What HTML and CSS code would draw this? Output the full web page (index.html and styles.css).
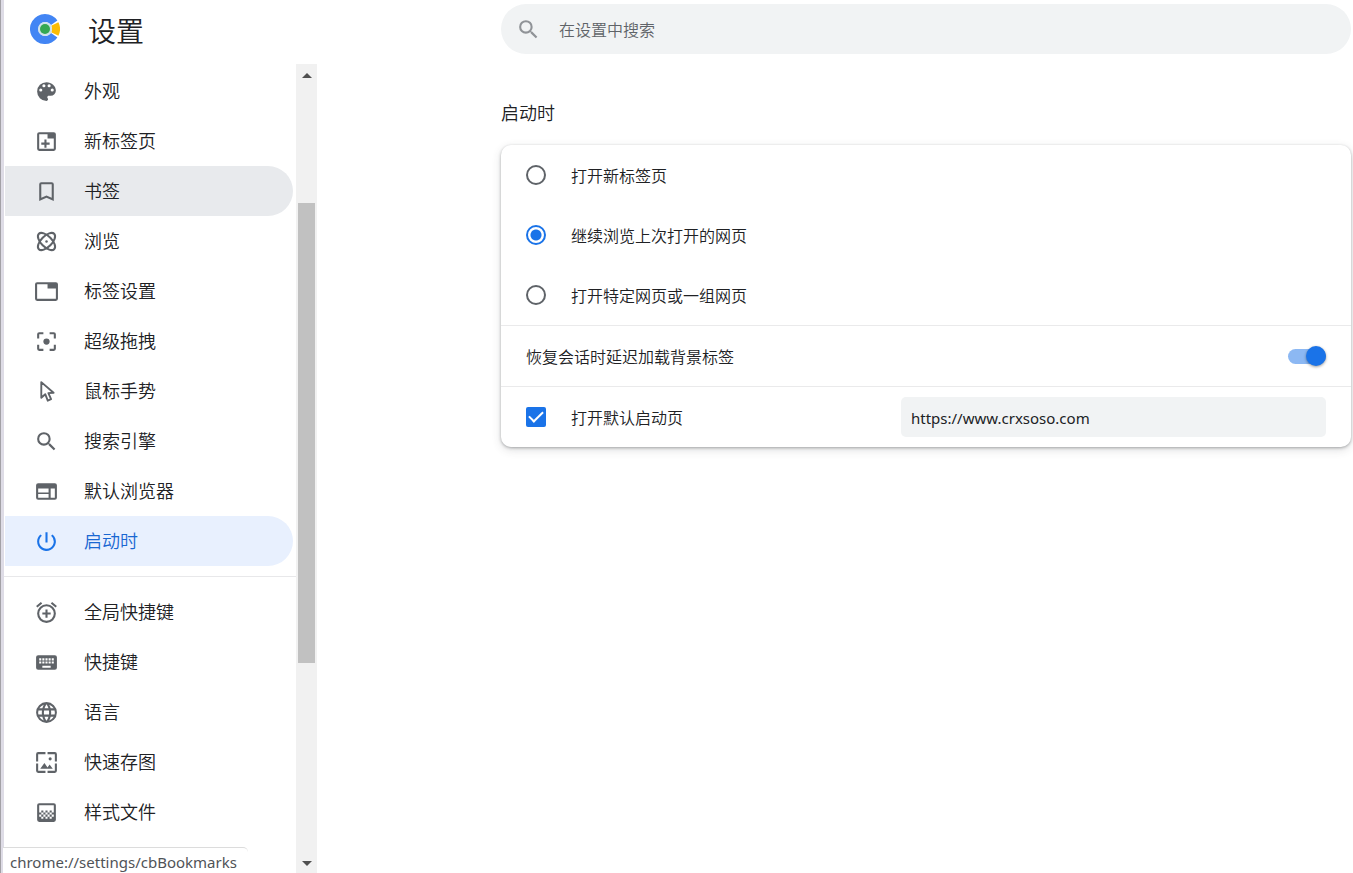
FILE: index.html
```html
<!DOCTYPE html>
<html lang="zh-CN">
<head>
<meta charset="utf-8">
<title>设置</title>
<link rel="stylesheet" href="styles.css">
</head>
<body>
<div class="app">
  <aside class="sidebar">
    <header class="brand">
      <svg class="logo" viewBox="0 0 30 30" aria-hidden="true">
        <path fill="#4285f4" d="M15 0A15 15 0 0 1 27.4 6.6L21 11A7 7 0 1 0 21 19L27.4 23.4A15 15 0 1 1 15 0z"/>
        <path fill="#fbbc05" d="M28.4 8.3A15 15 0 0 1 28.4 21.7L21.2 18.2A7 7 0 0 0 21.2 11.8z"/>
        <circle cx="15" cy="15" r="7" fill="#cfe3ea"/>
        <circle cx="15" cy="15" r="5" fill="#34a853"/>
      </svg>
      <h1 class="title">设置</h1>
    </header>
    <div class="scroll-area">
      <nav class="nav">
        <a class="item" href="#appearance"><svg class="icon" viewBox="0 0 24 24"><path fill-rule="evenodd" d="M12 3a9 9 0 0 0 0 18c.83 0 1.5-.67 1.5-1.5 0-.39-.15-.74-.39-1.01-.23-.26-.38-.61-.38-.99 0-.83.67-1.5 1.5-1.5H16a5 5 0 0 0 5-5c0-4.42-4.03-8-9-8zm-5.5 9a1.5 1.5 0 1 1 0-3 1.5 1.5 0 0 1 0 3zm3-4a1.5 1.5 0 1 1 0-3 1.5 1.5 0 0 1 0 3zm5 0a1.5 1.5 0 1 1 0-3 1.5 1.5 0 0 1 0 3zm3 4a1.5 1.5 0 1 1 0-3 1.5 1.5 0 0 1 0 3z"/></svg>外观</a>
        <a class="item" href="#newtab"><svg class="icon" viewBox="0 0 24 24"><path fill-rule="evenodd" d="M5 3h14a2 2 0 0 1 2 2v14a2 2 0 0 1-2 2H5a2 2 0 0 1-2-2V5a2 2 0 0 1 2-2zm0 2v14h14V9h-6V5z"/><path d="M10 10h2v3h3v2h-3v3h-2v-3H7v-2h3z"/></svg>新标签页</a>
        <a class="item hovered" href="#bookmarks"><svg class="icon" viewBox="0 0 24 24"><path d="M17 3H7a2 2 0 0 0-2 2v16l7-3 7 3V5a2 2 0 0 0-2-2zm0 15-5-2.18L7 18V5h10z"/></svg>书签</a>
        <a class="item" href="#browsing"><svg class="icon" viewBox="0 0 24 24"><g fill="none" stroke="currentColor" stroke-width="2"><ellipse cx="12" cy="12" rx="10.4" ry="5.200" transform="rotate(45 12 12)"/><ellipse cx="12" cy="12" rx="10.4" ry="5.200" transform="rotate(-45 12 12)"/></g><circle cx="12" cy="12" r="1.2"/></svg>浏览</a>
        <a class="item" href="#tabs"><svg class="icon" viewBox="0 0 24 24"><path fill-rule="evenodd" d="M3 3h18a2 2 0 0 1 2 2v14a2 2 0 0 1-2 2H3a2 2 0 0 1-2-2V5a2 2 0 0 1 2-2zm0 2v14h18V9h-8V5z"/></svg>标签设置</a>
        <a class="item" href="#drag"><svg class="icon" viewBox="0 0 24 24"><path d="M5 15H3v4a2 2 0 0 0 2 2h4v-2H5zM5 5h4V3H5a2 2 0 0 0-2 2v4h2zm14-2h-4v2h4v4h2V5a2 2 0 0 0-2-2zm0 16h-4v2h4a2 2 0 0 0 2-2v-4h-2z"/><circle cx="12" cy="12" r="3"/></svg>超级拖拽</a>
        <a class="item" href="#gestures"><svg class="icon" viewBox="0 0 24 24"><path d="M7 3v15l3.800-3.400 2.400 6.200 3.200-1.400-2.600-5.800 5-.4z" fill="none" stroke="currentColor" stroke-width="1.8" stroke-linejoin="round"/></svg>鼠标手势</a>
        <a class="item" href="#search"><svg class="icon" viewBox="0 0 24 24"><path d="M15.5 14h-.79l-.28-.27A6.47 6.47 0 0 0 16 9.5 6.5 6.5 0 1 0 9.5 16c1.61 0 3.09-.59 4.23-1.57l.27.28v.79l5 4.99L20.49 19zm-6 0a4.5 4.5 0 1 1 0-9 4.5 4.5 0 0 1 0 9z"/></svg>搜索引擎</a>
        <a class="item" href="#default"><svg class="icon" viewBox="0 0 24 24"><path fill-rule="evenodd" d="M4 4h16a2 2 0 0 1 2 2v12a2 2 0 0 1-2 2H4a2 2 0 0 1-2-2V6a2 2 0 0 1 2-2zm0 5v4h10V9zm0 5.500V18h10v-3.500zM16 9v9h4V9z"/></svg>默认浏览器</a>
        <a class="item selected" href="#startup" aria-current="page"><svg class="icon" viewBox="0 0 24 24"><path d="M13 3h-2v10h2zm4.830 2.170-1.420 1.420A6.920 6.920 0 0 1 19 12a7 7 0 1 1-11.420-5.420L6.170 5.170A8.930 8.930 0 0 0 3 12a9 9 0 1 0 14.830-6.830z"/></svg>启动时</a>
        <hr class="divider">
        <a class="item" href="#global"><svg class="icon" viewBox="0 0 24 24"><path d="M7.880 3.390 6.600 1.860 2 5.710l1.290 1.530zM22 5.720l-4.600-3.860-1.290 1.530 4.600 3.860zM12 4a9 9 0 1 0 0 18 9 9 0 0 0 0-18zm0 16a7 7 0 1 1 0-14 7 7 0 0 1 0 14zm1-11h-2v3H8v2h3v3h2v-3h3v-2h-3z"/></svg>全局快捷键</a>
        <a class="item" href="#shortcuts"><svg class="icon" viewBox="0 0 24 24"><path d="M20 5H4a2 2 0 0 0-2 2v10a2 2 0 0 0 2 2h16a2 2 0 0 0 2-2V7a2 2 0 0 0-2-2zm-9 3h2v2h-2zm0 3h2v2h-2zM8 8h2v2H8zm0 3h2v2H8zm-1 2H5v-2h2zm0-3H5V8h2zm9 7H8v-2h8zm0-4h-2v-2h2zm0-3h-2V8h2zm3 3h-2v-2h2zm0-3h-2V8h2z"/></svg>快捷键</a>
        <a class="item" href="#language"><svg class="icon" viewBox="0 0 24 24"><path d="M11.990 2a10 10 0 1 0 .01 20 10 10 0 0 0-.01-20zm6.930 6h-2.950a15.650 15.650 0 0 0-1.380-3.560A8.030 8.030 0 0 1 18.920 8zM12 4.040c.83 1.200 1.480 2.530 1.910 3.960h-3.820c.43-1.430 1.080-2.760 1.910-3.960zM4.260 14a8.200 8.200 0 0 1 0-4h3.380a16.500 16.500 0 0 0 0 4zm.82 2h2.950c.32 1.250.78 2.450 1.380 3.560A7.990 7.990 0 0 1 5.080 16zm2.950-8H5.080a7.990 7.990 0 0 1 4.330-3.560A15.650 15.650 0 0 0 8.030 8zM12 19.960A14.100 14.100 0 0 1 10.090 16h3.820A14.100 14.100 0 0 1 12 19.960zM14.340 14H9.660a14.700 14.700 0 0 1 0-4h4.680a14.700 14.700 0 0 1 0 4zm.25 5.560c.6-1.110 1.060-2.310 1.380-3.560h2.950a8.030 8.030 0 0 1-4.330 3.560zM16.360 14a16.500 16.500 0 0 0 0-4h3.380a8.200 8.200 0 0 1 0 4z"/></svg>语言</a>
        <a class="item" href="#images"><svg class="icon" viewBox="0 0 24 24"><path d="M4 4h7V2H4a2 2 0 0 0-2 2v7h2zm16-2h-7v2h7v7h2V4a2 2 0 0 0-2-2zm0 18h-7v2h7a2 2 0 0 0 2-2v-7h-2zM4 13H2v7a2 2 0 0 0 2 2h7v-2H4zm6-.5L6 18h12l-3-4-2 2.700zM17 8.500a1.500 1.500 0 1 0-3 0 1.500 1.500 0 0 0 3 0z"/></svg>快速存图</a>
        <a class="item" href="#styles"><svg class="icon" viewBox="0 0 24 24"><path fill-rule="evenodd" d="M5 3h14a2 2 0 0 1 2 2v14a2 2 0 0 1-2 2H5a2 2 0 0 1-2-2V5a2 2 0 0 1 2-2zm0 2v5h14V5zm0 5v2h2v-2zm4 0v2h2v-2zm4 0v2h2v-2zm4 0v2h2v-2zM7 12v2h2v-2zm4 0v2h2v-2zm4 0v2h2v-2zM5 14v2h2v-2zm4 0v2h2v-2zm4 0v2h2v-2zm4 0v2h2v-2zM7 16v2h2v-2zm4 0v2h2v-2zm4 0v2h2v-2z"/></svg>样式文件</a>
      </nav>
      <div class="scrollbar" aria-hidden="true">
        <span class="arrow"><svg viewBox="0 0 10 6"><path d="M5 0l5 5H0z"/></svg></span>
        <span class="space-above"></span>
        <span class="thumb"></span>
        <span class="space-below"></span>
        <span class="arrow"><svg viewBox="0 0 10 6"><path d="M0 0h10L5 5z"/></svg></span>
      </div>
    </div>
  </aside>
  <main class="main">
    <label class="search">
      <svg class="icon" viewBox="0 0 24 24" aria-hidden="true"><path d="M15.5 14h-.79l-.28-.27A6.47 6.47 0 0 0 16 9.5 6.5 6.5 0 1 0 9.5 16c1.61 0 3.09-.59 4.23-1.57l.27.28v.79l5 4.99L20.49 19zm-6 0a4.500 4.500 0 1 1 0-9 4.500 4.500 0 0 1 0 9z"/></svg>
      <input class="search-input" type="text" placeholder="在设置中搜索" aria-label="在设置中搜索">
    </label>
    <section class="section">
      <h2 class="heading">启动时</h2>
      <div class="card">
        <label class="row"><input class="radio" type="radio" name="startup"><span class="text">打开新标签页</span></label>
        <label class="row"><input class="radio" type="radio" name="startup" checked><span class="text">继续浏览上次打开的网页</span></label>
        <label class="row"><input class="radio" type="radio" name="startup"><span class="text">打开特定网页或一组网页</span></label>
        <label class="row ruled spread"><span class="text">恢复会话时延迟加载背景标签</span><input class="switch" type="checkbox" role="switch" checked></label>
        <div class="row ruled halves">
          <label class="option"><input class="check" type="checkbox" checked><span class="text">打开默认启动页</span></label>
          <input class="url" type="text" value="https://www.crxsoso.com" aria-label="默认启动页网址">
        </div>
      </div>
    </section>
  </main>
  <div class="status">chrome://settings/cbBookmarks</div>
</div>
</body>
</html>
```
FILE: styles.css
```css
* { box-sizing: border-box; }

body {
  margin: 0;
  color: #202124;
  background: #fff;
  font: 350 16px/24px "Open Sans", "Noto Sans CJK SC", sans-serif;
}

.app {
  position: relative;
  display: flex;
  height: 100vh;
  overflow: hidden;
  border-left: 1px solid #a3a1a6;
  box-shadow: inset 3px 0 #dedce6;
  padding-left: 3px;
}

.sidebar {
  flex: none;
  display: flex;
  flex-direction: column;
  width: 313px;
}

.brand {
  flex: none;
  display: flex;
  align-items: center;
  gap: 28px;
  height: 64px;
  padding: 0 26px 6px;
}

.logo { width: 30px; height: 30px; }

.title {
  margin: 0;
  padding-top: 4px;
  font-size: 28px;
  font-weight: 350;
  line-height: 36px;
}

.scroll-area {
  flex: 1;
  display: flex;
  min-height: 0;
}

.nav {
  flex: 1;
  overflow: hidden;
  padding-top: 2px;
}

.item {
  display: flex;
  align-items: center;
  gap: 25px;
  height: 50px;
  margin: 0 3px 0 1px;
  padding-left: 29px;
  border-radius: 0 25px 25px 0;
  color: #202124;
  font-size: 18px;
  text-decoration: none;
}

.icon {
  flex: none;
  width: 25px;
  height: 25px;
  color: #5f6368;
  fill: currentColor;
}

.hovered { background: #e8eaed; }
.selected { background: #e8f0fe; color: #1967d2; }
.selected .icon { color: #1a73e8; }

.divider {
  margin: 10px 0;
  border: 0;
  border-top: 1px solid #e8e8ea;
}

.scrollbar {
  display: flex;
  flex-direction: column;
  width: 21px;
  padding: 0 2px;
  background: #f1f1f1;
}

.arrow {
  display: flex;
  align-items: center;
  justify-content: center;
  height: 21px;
  padding-top: 3px;
}

.arrow svg { width: 10px; height: 6px; fill: #505050; }
.space-above { flex: 118; }
.thumb { flex: 460; background: #c1c1c1; }
.space-below { flex: 189; }

.main {
  flex: 1;
  min-width: 0;
  padding: 4px 2px 0 184px;
}

.search {
  display: flex;
  align-items: center;
  gap: 18px;
  height: 50px;
  padding: 0 15px;
  border-radius: 25px;
  background: #f1f3f4;
}

.search .icon { color: #909397; }

.search-input {
  flex: 1;
  padding: 2px 0 0;
  border: 0;
  outline: 0;
  background: none;
  color: #202124;
  font: inherit;
}

.search-input::placeholder { color: #5f6368; opacity: 1; }

.section { padding-top: 46px; }

.heading {
  margin: 0 0 18px;
  font-size: 18px;
  font-weight: 350;
  line-height: 27px;
}

.card {
  border-radius: 10px;
  background: #fff;
  box-shadow: 0 1px 3px rgba(60, 64, 67, .4), 0 3px 10px rgba(60, 64, 67, .16);
}

.row {
  display: flex;
  align-items: center;
  gap: 25px;
  min-height: 60px;
  padding: 0 25px;
}

.row.ruled { border-top: 1px solid #eaeaeb; min-height: 61px; gap: 0; }
.row.spread { justify-content: space-between; }
.row.halves { display: grid; grid-template-columns: 375fr 425fr; }

.text { padding-top: 2px; }

.option {
  display: flex;
  align-items: center;
  gap: 25px;
}

.radio, .check, .switch {
  appearance: none;
  flex: none;
  margin: 0;
}

.radio {
  width: 20px;
  height: 20px;
  border: 2px solid #5f6368;
  border-radius: 50%;
}

.radio:checked {
  border-color: #1a73e8;
  background: radial-gradient(circle, #1a73e8 5px, transparent 6px);
}

.check {
  display: grid;
  place-items: center;
  width: 20px;
  height: 20px;
  border-radius: 2px;
  background: #1a73e8;
}

.check:checked::before {
  content: "";
  width: 12px;
  height: 6px;
  margin-bottom: 4px;
  border: solid #fff;
  border-width: 0 0 2px 2px;
  transform: rotate(-45deg);
}

.switch {
  display: flex;
  align-items: center;
  justify-content: flex-end;
  width: 38px;
  height: 15px;
  border-radius: 8px;
  background: #8cb8f3;
}

.switch::before {
  content: "";
  width: 20px;
  height: 20px;
  border-radius: 50%;
  background: #1a73e8;
  box-shadow: 0 1px 3px rgba(0, 0, 0, .4);
}

.url {
  width: 100%;
  min-width: 0;
  height: 40px;
  padding: 2px 10px 0;
  border: 0;
  border-radius: 5px;
  background: #f1f3f4;
  color: #202124;
  font: 400 15px/24px "Noto Sans", sans-serif;
}

.status {
  position: absolute;
  bottom: 0;
  left: 2px;
  height: 26px;
  padding: 2px 11px 0 7px;
  border: 1px solid #dcdcdc;
  border-width: 1px 0 0;
  border-radius: 0 5px 0 0;
  background: #fff;
  color: #505357;
  font: 400 15px/24px "Noto Sans", sans-serif;
}
```
